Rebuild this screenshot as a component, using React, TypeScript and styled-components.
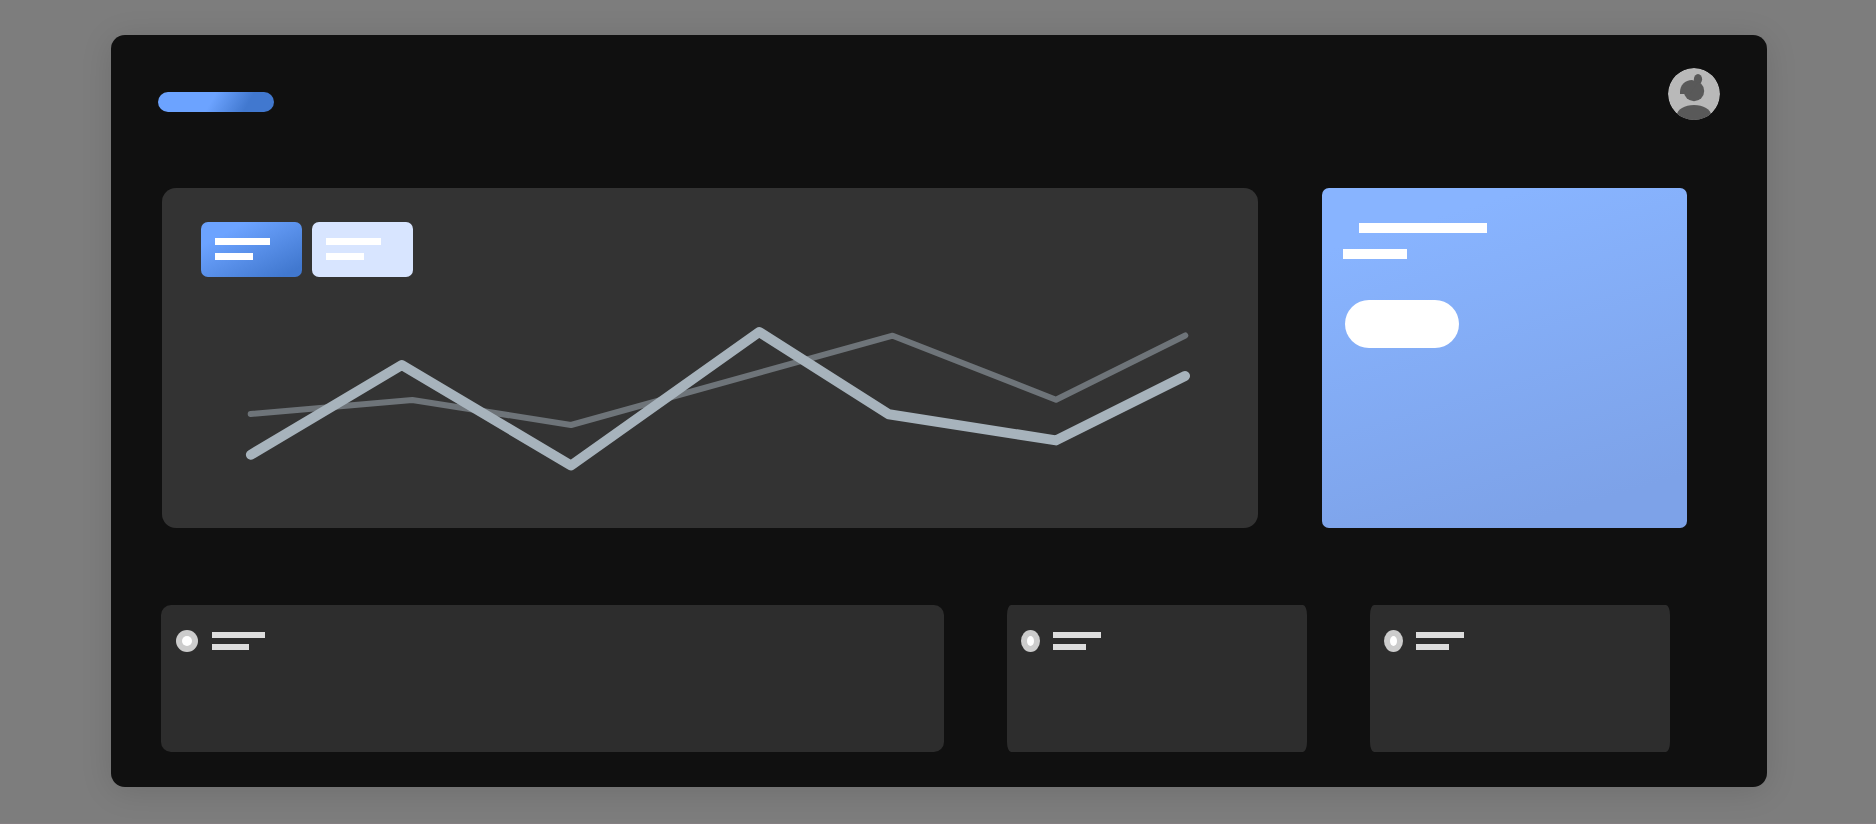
import React from "react";
import styled, { createGlobalStyle } from "styled-components";

const GlobalStyle = createGlobalStyle`
  *, *::before, *::after { box-sizing: border-box; }
  body { margin: 0; background: #ffffff; font-family: "Liberation Sans", sans-serif; }
`;

const Page = styled.div`
  min-height: calc(100vh - 6px);
  padding: 35px 109px 36px 111px;
  border-bottom: 1px solid #847f82;
  background: #7d7d7d;
  overflow: hidden;
`;

const Shell = styled.main`
  padding: 33px 0 35px 50px;
  border-radius: 14px;
  background: #101010;
  box-shadow: 0 4px 32px rgba(0, 0, 0, 0.12);
`;

const TopBar = styled.header`
  display: flex;
  justify-content: space-between;
  align-items: center;
  padding-right: 47px;
  margin: 0 0 68px -3px;
`;

const Brand = styled.a`
  width: 116px;
  height: 20px;
  margin-top: 16px;
  border-radius: 10px;
  background: linear-gradient(120deg, #6ca3ff 46%, #4178cf 76%);
`;

const AvatarButton = styled.button`
  width: 52px;
  height: 52px;
  padding: 0;
  border: 0;
  border-radius: 50%;
  background: none;
  svg { display: block; }
`;

const Overview = styled.div`
  display: grid;
  grid-template-columns: 1096fr 365fr;
  gap: 64px;
  padding: 0 80px 0 1px;
  margin-bottom: 77px;
`;

const ChartCard = styled.section`
  padding-top: 34px;
  border-radius: 14px;
  background: #333333;
`;

const Chips = styled.div`
  display: flex;
  gap: 10px;
  padding-left: 39px;
`;

const Chip = styled.button<{ $active?: boolean }>`
  display: flex;
  flex-direction: column;
  gap: 8px;
  width: 101px;
  height: 55px;
  padding: 16px 14px;
  border: 0;
  border-radius: 7px;
  background: ${(p) => (p.$active ? "linear-gradient(152deg, #6ca3ff 22%, #4178cf 90%)" : "#d8e5ff")};
`;

const Line = styled.span<{ $w: number; $h: number; $tone?: string }>`
  display: block;
  flex: none;
  width: ${(p) => p.$w}px;
  height: ${(p) => p.$h}px;
  background: ${(p) => p.$tone ?? "#ffffff"};
`;

const Chart = styled.svg`
  display: block;
  width: 100%;
`;

const PromoCard = styled.section`
  padding: 35px 21px;
  border-radius: 7px;
  background: linear-gradient(163deg, #88b4ff 14%, #7da2e8 88%);
`;

const PromoTitle = styled.div`
  padding-left: 16px;
  margin-bottom: 16px;
`;

const PromoButton = styled.button`
  display: block;
  width: 114px;
  height: 48px;
  margin: 41px 0 0 2px;
  border: 0;
  border-radius: 24px;
  background: #ffffff;
`;

const Stats = styled.div`
  display: grid;
  grid-template-columns: 783fr 300fr 300fr;
  gap: 63px;
  padding-right: 97px;
`;

const StatCard = styled.article<{ $narrow?: boolean }>`
  display: flex;
  align-items: flex-start;
  gap: ${(p) => (p.$narrow ? 13 : 14)}px;
  height: 147px;
  padding: 25px ${(p) => (p.$narrow ? 14 : 15)}px;
  border-radius: ${(p) => (p.$narrow ? "4px / 10px" : "10px")};
  background: #2d2d2d;
`;

const Marker = styled.span<{ $narrow?: boolean }>`
  display: grid;
  place-items: center;
  width: ${(p) => (p.$narrow ? 19 : 22)}px;
  height: 22px;
  border-radius: 50%;
  background: #cccccc;
  &::after {
    content: "";
    width: ${(p) => (p.$narrow ? 7 : 10)}px;
    height: 10px;
    border-radius: 50%;
    background: #ffffff;
  }
`;

const StatLines = styled.div`
  display: flex;
  flex-direction: column;
  gap: 6px;
  padding-top: 2px;
`;

const Avatar = () => (
  <svg width="52" height="52" viewBox="0 0 52 52" aria-hidden="true">
    <defs>
      <clipPath id="avatar-clip">
        <circle cx="26" cy="26" r="26" />
      </clipPath>
    </defs>
    <g clipPath="url(#avatar-clip)">
      <circle cx="26" cy="26" r="26" fill="#b9b9b9" />
      <g fill="#595959">
        <ellipse cx="30" cy="11.3" rx="4.1" ry="5.3" />
        <circle cx="26" cy="23" r="10.2" />
        <path d="M12 26V24C12 17 17 12 24 12L30 14L22 26Z" />
        <ellipse cx="26" cy="47" rx="17" ry="10" />
      </g>
    </g>
  </svg>
);

const stats = [
  { id: "primary", narrow: false, long: 53, short: 37 },
  { id: "second", narrow: true, long: 48, short: 33 },
  { id: "third", narrow: true, long: 48, short: 33 },
];

export default function App() {
  return (
    <>
      <GlobalStyle />
      <Page>
        <Shell>
          <TopBar>
            <Brand href="#" aria-label="Home" />
            <AvatarButton type="button" aria-label="Account">
              <Avatar />
            </AvatarButton>
          </TopBar>
          <Overview>
            <ChartCard>
              <Chips>
                <Chip type="button" $active aria-label="Current series">
                  <Line $w={55} $h={7} />
                  <Line $w={38} $h={7} />
                </Chip>
                <Chip type="button" aria-label="Previous series">
                  <Line $w={55} $h={7} />
                  <Line $w={38} $h={7} />
                </Chip>
              </Chips>
              <Chart viewBox="162 277 1096 251" fill="none" strokeLinecap="round" strokeLinejoin="round" aria-hidden="true">
                <polyline
                  points="250.7,414 412.3,400 571,425 892.7,335.7 1056,399.7 1185.3,335.5"
                  stroke="#6e7479"
                  strokeWidth="6"
                />
                <polyline
                  points="250.9,454.7 401.8,365 571,465.5 759.2,332 888.7,414.2 1056,440.4 1185,376"
                  stroke="#a7b3bc"
                  strokeWidth="10"
                />
              </Chart>
            </ChartCard>
            <PromoCard>
              <PromoTitle>
                <Line $w={128} $h={10} />
              </PromoTitle>
              <Line $w={64} $h={10} />
              <PromoButton type="button" aria-label="Open" />
            </PromoCard>
          </Overview>
          <Stats>
            {stats.map((s) => (
              <StatCard key={s.id} $narrow={s.narrow}>
                <Marker $narrow={s.narrow} />
                <StatLines>
                  <Line $w={s.long} $h={6} $tone="#dddddd" />
                  <Line $w={s.short} $h={6} $tone="#dddddd" />
                </StatLines>
              </StatCard>
            ))}
          </Stats>
        </Shell>
      </Page>
    </>
  );
}
